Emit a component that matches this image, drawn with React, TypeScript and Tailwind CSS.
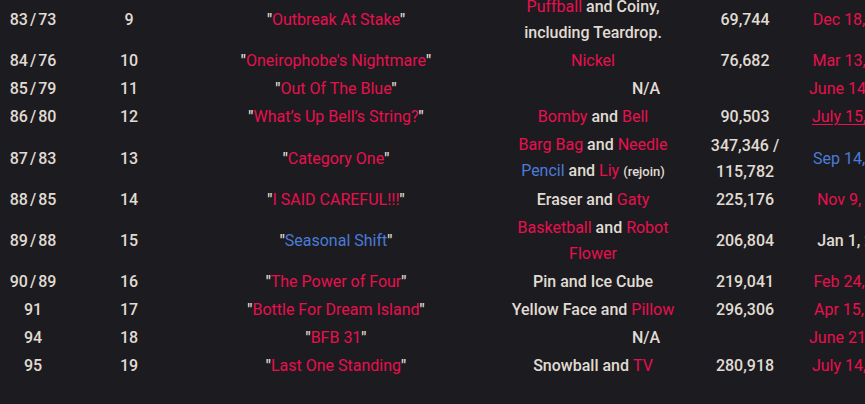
import type { ReactNode } from 'react';

const red = (t: string) => <span className="font-normal text-[#e8104e]">{t}</span>;
const blue = (t: string) => <span className="font-normal text-[#4a7bd8]">{t}</span>;
const quoted = (node: ReactNode) => (
  <>
    "{node}"
  </>
);

// episode pair like "83 / 73" with narrow gaps round the slash
const pair = (a: string, b: string) => (
  <>
    {a}
    <span className="mx-[2px]">/</span>
    {b}
  </>
);

type Row = {
  ep: ReactNode;
  no: string;
  title: ReactNode;
  chars: ReactNode;
  views?: ReactNode;
  date: ReactNode;
};

const rows: Row[] = [
  {
    ep: pair('83', '73'),
    no: '9',
    title: quoted(red('Outbreak At Stake')),
    chars: (
      <>
        {red('Puffball')} and Coiny,
        <br />
        including Teardrop.
      </>
    ),
    views: '69,744',
    date: red('Dec 18, 2018'),
  },
  {
    ep: pair('84', '76'),
    no: '10',
    title: quoted(red("Oneirophobe's Nightmare")),
    chars: red('Nickel'),
    views: '76,682',
    date: red('Mar 13, 2019'),
  },
  {
    ep: pair('85', '79'),
    no: '11',
    title: quoted(red('Out Of The Blue')),
    chars: 'N/A',
    date: red('June 14, 2019'),
  },
  {
    ep: pair('86', '80'),
    no: '12',
    title: quoted(red('What\u2019s Up Bell\u2019s String?')),
    chars: (
      <>
        {red('Bomby')} and {red('Bell')}
      </>
    ),
    views: '90,503',
    date: <span className="font-normal text-[#e8104e] underline underline-offset-2">July 15, 2019</span>,
  },
  {
    ep: pair('87', '83'),
    no: '13',
    title: quoted(red('Category One')),
    chars: (
      <>
        {red('Barg Bag')} and {red('Needle')}
        <br />
        {blue('Pencil')} and {red('Liy')} <span className="text-[13px]">(rejoin)</span>
      </>
    ),
    views: (
      <>
        347,346 /
        <br />
        115,782
      </>
    ),
    date: blue('Sep 14, 2019'),
  },
  {
    ep: pair('88', '85'),
    no: '14',
    title: quoted(red('I SAID CAREFUL!!!')),
    chars: <>Eraser and {red('Gaty')}</>,
    views: '225,176',
    date: red('Nov 9, 2019'),
  },
  {
    ep: pair('89', '88'),
    no: '15',
    title: quoted(blue('Seasonal Shift')),
    chars: (
      <>
        {red('Basketball')} and {red('Robot')}
        <br />
        {red('Flower')}
      </>
    ),
    views: '206,804',
    date: 'Jan 1, 2020',
  },
  {
    ep: pair('90', '89'),
    no: '16',
    title: quoted(red('The Power of Four')),
    chars: 'Pin and Ice Cube',
    views: '219,041',
    date: red('Feb 24, 2020'),
  },
  {
    ep: '91',
    no: '17',
    title: quoted(red('Bottle For Dream Island')),
    chars: <>Yellow Face and {red('Pillow')}</>,
    views: '296,306',
    date: red('Apr 15, 2020'),
  },
  {
    ep: '94',
    no: '18',
    title: quoted(red('BFB 31')),
    chars: 'N/A',
    date: red('June 21, 2020'),
  },
  {
    ep: '95',
    no: '19',
    title: quoted(red('Last One Standing')),
    chars: <>Snowball and {red('TV')}</>,
    views: '280,918',
    date: red('July 14, 2020'),
  },
];

const cell = 'px-2 py-px text-center align-middle whitespace-nowrap';

export default function App() {
  return (
    <div className="w-[865px] h-[404px] overflow-hidden bg-[#1c1b20] text-[#e0dcd3] font-['Roboto','Liberation_Sans',sans-serif] text-[16px] leading-[26px] font-medium">
      <table className="table-fixed border-collapse w-[934px] -ml-[14px] -mt-[7px]">
        <colgroup>
          <col className="w-[94px]" />
          <col className="w-[98px]" />
          <col className="w-[316px]" />
          <col className="w-[198px]" />
          <col className="w-[106px]" />
          <col className="w-[122px]" />
        </colgroup>
        <tbody>
          {rows.map((r) => (
            <tr key={r.no}>
              <td className={cell}>{r.ep}</td>
              <td className={cell}>{r.no}</td>
              <td className={cell}>{r.title}</td>
              {r.views === undefined ? (
                <td className={cell} colSpan={2}>
                  {r.chars}
                </td>
              ) : (
                <>
                  <td className={cell}>{r.chars}</td>
                  <td className={cell}>{r.views}</td>
                </>
              )}
              <td className={cell}>{r.date}</td>
            </tr>
          ))}
        </tbody>
      </table>
    </div>
  );
}
